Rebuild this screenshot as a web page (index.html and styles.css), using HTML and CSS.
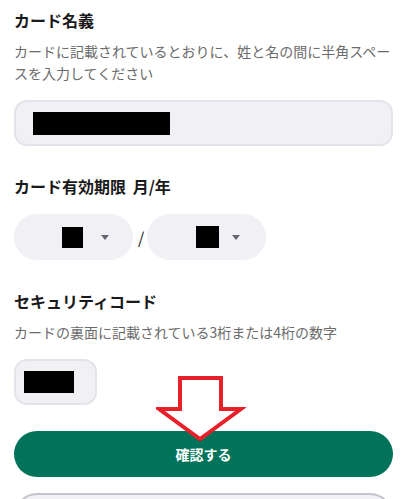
FILE: index.html
```html
<!DOCTYPE html>
<html lang="ja">
<head>
<meta charset="utf-8">
<title>カード情報</title>
<link rel="stylesheet" href="styles.css">
</head>
<body>
<main class="form">
  <section class="field field--name">
    <h2 class="field-title">カード名義</h2>
    <p class="field-desc">カードに記載されているとおりに、姓と名の間に半角スペースを入力してください</p>
    <div class="text-input text-input--wide"><span class="redact redact--name"></span></div>
  </section>

  <section class="field field--expiry">
    <h2 class="field-title">カード有効期限 <span class="unit">月/年</span></h2>
    <div class="expiry">
      <div class="select select--month"><span class="redact redact--month"></span><span class="caret"></span></div>
      <span class="slash">/</span>
      <div class="select select--year"><span class="redact redact--year"></span><span class="caret"></span></div>
    </div>
  </section>

  <section class="field field--cvc">
    <h2 class="field-title">セキュリティコード</h2>
    <p class="field-desc">カードの裏面に記載されている3桁または4桁の数字</p>
    <div class="text-input text-input--short"><span class="redact redact--cvc"></span></div>
  </section>

  <div class="actions">
    <button class="btn btn--primary" type="button">確認する</button>
    <button class="btn btn--secondary" type="button"></button>
    <svg class="arrow" width="90" height="72" viewBox="0 0 90 72" aria-hidden="true">
      <polygon points="24,5 65,5 65,36 85,36 44,66 3,36 24,36" fill="#ffffff" stroke="#e8202a" stroke-width="4" stroke-linejoin="miter"/>
    </svg>
  </div>
</main>
</body>
</html>
```

FILE: styles.css
```css
* {
  box-sizing: border-box;
}

html, body {
  margin: 0;
  padding: 0;
  background: #ffffff;
}

body {
  font-family: "Noto Sans CJK JP", "Noto Sans", sans-serif;
  color: #1a1a1a;
}

.form {
  position: relative;
  padding: 8px 15px 0 14px;
  display: flex;
  flex-direction: column;
}

.field {
  display: flex;
  flex-direction: column;
}

.field--expiry {
  margin-top: 28px;
}

.field--cvc {
  margin-top: 29px;
}

.field-title {
  margin: 0;
  font-size: 16px;
  line-height: 24px;
  font-weight: 700;
  color: #1a1a1a;
}

.unit {
  margin-left: 3px;
}

.field-desc {
  margin: 8px 0 0;
  font-size: 14px;
  line-height: 22px;
  color: #6b6b6b;
}

.text-input {
  margin-top: 16px;
  height: 46px;
  background: #f0f0f5;
  border: 2px solid #e3e3ea;
  border-radius: 13px;
  display: flex;
  align-items: center;
}

.text-input--wide {
  width: 379px;
  padding-left: 17px;
}

.text-input--short {
  width: 83px;
  padding-left: 8px;
}

.redact {
  display: block;
  background: #000000;
}

.redact--name {
  width: 137px;
  height: 23px;
}

.redact--cvc {
  width: 50px;
  height: 22px;
}

.expiry {
  margin-top: 16px;
  display: flex;
  align-items: center;
  gap: 5px;
}

.select {
  width: 119px;
  height: 46px;
  border-radius: 23px;
  background: #f0f0f5;
  display: flex;
  align-items: center;
}

.select--month {
  padding-left: 48px;
  gap: 18px;
}

.select--year {
  padding-left: 49px;
  gap: 13px;
}

.redact--month {
  width: 21px;
  height: 21px;
}

.redact--year {
  width: 23px;
  height: 22px;
}

.caret {
  width: 0;
  height: 0;
  border-left: 4.5px solid transparent;
  border-right: 4.5px solid transparent;
  border-top: 5px solid #666670;
}

.slash {
  font-size: 16px;
  line-height: 24px;
  color: #1a1a1a;
  width: 4px;
}

.actions {
  margin-top: 26px;
  display: flex;
  flex-direction: column;
  gap: 16px;
}

.btn {
  width: 379px;
  height: 46px;
  border-radius: 23px;
  font-family: "Noto Sans CJK JP", "Noto Sans", sans-serif;
  font-size: 14px;
  font-weight: 700;
  padding: 0;
  cursor: pointer;
}

.btn--primary {
  background: #00735a;
  border: none;
  color: #ffffff;
}

.btn--secondary {
  background: #f0f0f5;
  border: 2px solid #c4c4cc;
}

.arrow {
  position: absolute;
  left: 156px;
  top: 373px;
  display: block;
}
```
